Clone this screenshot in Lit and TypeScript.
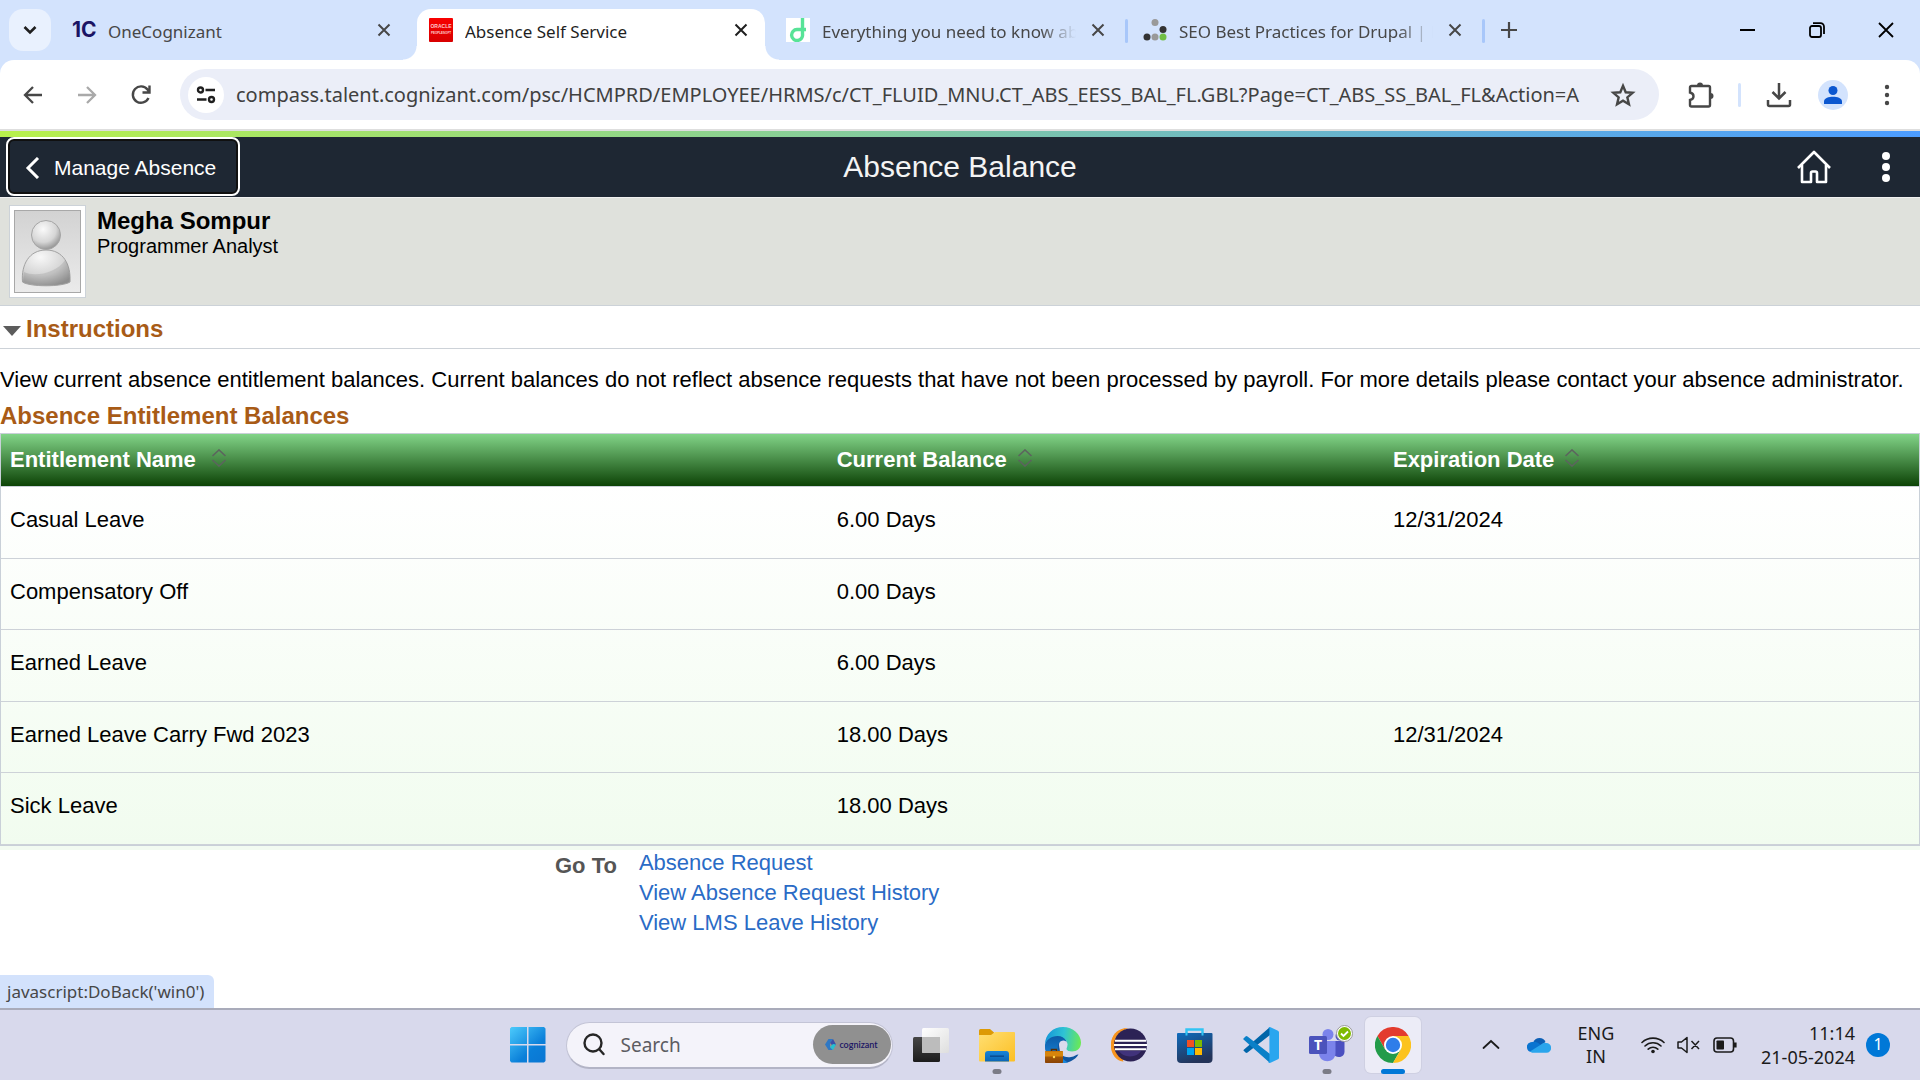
import { LitElement, html, css, svg, nothing } from "lit";
import { customElement, property } from "lit/decorators.js";
import { classMap } from "lit/directives/class-map.js";

const UI_FONT = css`"Noto Sans", "Open Sans", sans-serif`;
const PAGE_FONT = css`"Liberation Sans", Arial, sans-serif`;

const reset = css`
  * { box-sizing: border-box; }
  button, input {
    font: inherit;
    color: inherit;
    background: none;
    border: 0;
    padding: 0;
    margin: 0;
  }
  button { display: flex; align-items: center; justify-content: center; }
  svg { display: block; flex: none; }
`;

interface Tab { title: string; icon: string; active?: boolean; divider?: boolean; }

const TABS: Tab[] = [
  { title: "OneCognizant", icon: "onecognizant" },
  { title: "Absence Self Service", icon: "oracle", active: true },
  { title: "Everything you need to know ab", icon: "d", divider: true },
  { title: "SEO Best Practices for Drupal | D", icon: "dots", divider: true },
];

const favicons: Record<string, unknown> = {
  onecognizant: html`<span class="fav-1c">1C</span>`,
  oracle: html`<svg width="24" height="24" viewBox="0 0 24 24">
    <defs><linearGradient id="o" x2="0" y2="1"><stop offset="0" stop-color="#f80000"/><stop offset="1" stop-color="#d80000"/></linearGradient></defs>
    <rect width="24" height="24" rx="1" fill="url(#o)"/>
    <text x="12" y="10" text-anchor="middle" font-size="5" font-weight="700" fill="#ffc9c9" font-family="Liberation Sans, sans-serif">ORACLE</text>
    <text x="12" y="16" text-anchor="middle" font-size="3" font-weight="700" fill="#ffd5d5" font-family="Liberation Sans, sans-serif">PEOPLESOFT</text>
  </svg>`,
  d: html`<svg width="24" height="24" viewBox="0 0 24 24"><rect width="24" height="24" fill="#fff"/>
    <path d="M16.500 0V16a5.500 5.500 0 1 1-5.500-4.500H20" fill="none" stroke="#57e397" stroke-width="3.400"/></svg>`,
  dots: html`<svg width="24" height="24" viewBox="0 0 24 24">
    <circle cx="12" cy="4.500" r="3.500" fill="#999"/><circle cx="20" cy="11.500" r="3.500" fill="#333"/>
    <circle cx="4" cy="19" r="3.500" fill="#333"/><circle cx="12" cy="19" r="3.500" fill="#999"/><circle cx="20" cy="19" r="3.500" fill="#70bf44"/></svg>`,
};

@customElement("browser-tabs")
class BrowserTabs extends LitElement {
  @property({ attribute: false }) tabs: Tab[] = [];
  static styles = [reset, css`
    :host {
      display: flex;
      height: 60px;
      background: #d3e3fd;
      font-family: ${UI_FONT};
      font-size: 17px;
      color: #474747;
    }
    .strip { display: flex; flex: 1; min-width: 0; padding: 9px 0 0 9px; }
    .menu { width: 42px; height: 42px; border-radius: 14px; background: #e9f1fe; color: #1f1f1f; margin-right: 9px; }
    .tab {
      position: relative;
      display: flex;
      align-items: center;
      flex: 0 1 348px;
      min-width: 0;
      height: 51px;
      padding: 0 12px 9px;
      gap: 12px;
    }
    .active { background: #fff; border-radius: 14px 14px 0 0; color: #1f1f1f; }
    .active::before, .active::after {
      content: "";
      position: absolute;
      bottom: 0;
      width: 14px;
      height: 14px;
    }
    .active::before { right: 100%; background: radial-gradient(circle at 0 0, #0000 13px, #fff 14px); }
    .active::after { left: 100%; background: radial-gradient(circle at 100% 0, #0000 13px, #fff 14px); }
    .fav { display: flex; width: 24px; height: 24px; align-items: center; }
    .fav-1c { font: 700 21px/24px Inter, sans-serif; color: #1b1464; }
    .title {
      flex: 1;
      min-width: 0;
      line-height: 24px;
      margin-top: 4px;
      white-space: nowrap;
      overflow: hidden;
    }
    .fade { margin-right: -6px; mask-image: linear-gradient(90deg, #000 calc(100% - 40px), #0000 calc(100% - 4px)); }
    .close { width: 24px; height: 24px; }
    .divider { flex: none; width: 3px; height: 24px; margin: 10px 3px 0; border-radius: 2px; }
    .shown { background: #a8c7fa; }
    .new { width: 42px; height: 42px; }
    .controls { display: flex; color: #000; }
    .controls button { width: 69px; height: 59px; }
  `];
  render() {
    return html`
      <div class="strip">
        <button class="menu" aria-label="Search tabs">
          <svg width="16" height="16" viewBox="0 0 16 16" fill="none" stroke="currentColor" stroke-width="2.600"><path d="M2.500 5l5.500 5.500L13.500 5"/></svg>
        </button>
        ${this.tabs.map((t) => html`
          <div class=${classMap({ tab: true, active: !!t.active })}>
            <span class="fav">${favicons[t.icon]}</span>
            <span class=${classMap({ title: true, fade: !!t.divider })}>${t.title}</span>
            <button class="close" aria-label="Close tab">
              <svg width="14" height="14" viewBox="0 0 14 14" stroke="currentColor" stroke-width="2"><path d="M1.500 1.500l11 11M12.500 1.500l-11 11"/></svg>
            </button>
          </div>
          <span class=${classMap({ divider: true, shown: !!t.divider })}></span>`)}
        <button class="new" aria-label="New tab">
          <svg width="18" height="18" viewBox="0 0 18 18" stroke="currentColor" stroke-width="2.200"><path d="M9 1v16M1 9h16"/></svg>
        </button>
      </div>
      <div class="controls">
        <button aria-label="Minimize"><svg width="16" height="16" viewBox="0 0 16 16"><path d="M0 8h15" stroke="currentColor" stroke-width="2"/></svg></button>
        <button aria-label="Restore"><svg width="16" height="16" viewBox="0 0 16 16" fill="none" stroke="currentColor" stroke-width="1.800"><rect x="1" y="4" width="11" height="11" rx="2"/><path d="M4 1.200h7.500a3.500 3.500 0 0 1 3.500 3.500V12"/></svg></button>
        <button aria-label="Close window"><svg width="16" height="16" viewBox="0 0 16 16" stroke="currentColor" stroke-width="1.800"><path d="M1 1l14 14M15 1L1 15"/></svg></button>
      </div>`;
  }
}

@customElement("browser-toolbar")
class BrowserToolbar extends LitElement {
  @property() url = "";
  static styles = [reset, css`
    :host { display: block; background: #d3e3fd; color: #474747; font-family: ${UI_FONT}; }
    .bar {
      display: flex;
      align-items: center;
      height: 71px;
      padding: 0 9px;
      background: #fff;
      border-radius: 14px 14px 0 0;
      border-bottom: 2px solid #dedede;
    }
    .nav { display: flex; gap: 6px; margin-right: 15px; }
    .nav button, .tools button { width: 48px; height: 48px; }
    .dim { color: #a9a9a9; }
    .omnibox {
      display: flex;
      align-items: center;
      flex: 1;
      min-width: 0;
      height: 51px;
      padding: 0 12px 0 8px;
      border-radius: 26px;
      background: #ebeef8;
    }
    .site { width: 36px; height: 36px; border-radius: 50%; background: #fff; color: #1f1f1f; margin-right: 12px; }
    .address { flex: 1; min-width: 0; height: 40px; font-size: 20px; color: #404040; outline: none; }
    .star { width: 48px; height: 48px; }
    .tools { display: flex; align-items: center; margin-left: 17px; }
    .rule { width: 3px; height: 24px; background: #d3e3fd; border-radius: 2px; margin: 0 14px; }
    .tools .avatar { width: 30px; height: 30px; border-radius: 50%; background: #d3e3fd; color: #0b57d0; margin: 0 15px; }
  `];
  render() {
    return html`<div class="bar">
      <div class="nav">
        <button aria-label="Back"><svg width="20" height="20" viewBox="0 0 20 20" fill="none" stroke="currentColor" stroke-width="2.300"><path d="M19 10H2.500M10 2L2 10l8 8"/></svg></button>
        <button class="dim" aria-label="Forward"><svg width="20" height="20" viewBox="0 0 20 20" fill="none" stroke="currentColor" stroke-width="2.300"><path d="M1 10h16.500M10 2l8 8-8 8"/></svg></button>
        <button aria-label="Reload"><svg width="22" height="22" viewBox="0 0 22 22" fill="none" stroke="currentColor" stroke-width="2.400"><path d="M18.500 14a8.200 8.200 0 1 1-1-8.500L19 7.500M19.500 1.500V8.500H12.500"/></svg></button>
      </div>
      <div class="omnibox">
        <button class="site" aria-label="View site information"><svg width="20" height="20" viewBox="0 0 20 20" fill="none" stroke="currentColor" stroke-width="2.400"><circle cx="4.500" cy="5" r="2.500"/><path d="M9.500 5H19M1 14.500h9.500"/><circle cx="15.500" cy="14.500" r="2.500"/></svg></button>
        <input class="address" type="text" aria-label="Address and search bar" .value=${this.url} />
        <button class="star" aria-label="Bookmark this tab"><svg width="26" height="26" viewBox="0 0 24 24" fill="none" stroke="currentColor" stroke-width="2.200"><path d="M12 3.500l2.500 6 6.400.500-4.900 4.200 1.500 6.300L12 17.200l-5.500 3.300L8 14.200 3.100 10l6.400-.500z"/></svg></button>
      </div>
      <div class="tools">
        <button aria-label="Extensions"><svg width="28" height="28" viewBox="0 0 28 28" fill="none" stroke="currentColor" stroke-width="2.400"><path d="M5.500 5h17a1.500 1.500 0 0 1 1.500 1.500V24a1.500 1.500 0 0 1-1.500 1.500h-17A1.500 1.500 0 0 1 4 24v-5c2.500-.500 3.500-2 3.500-3.800S6.500 12 4 11.500v-5A1.500 1.500 0 0 1 5.500 5z"/><path d="M11 4.500a3 3 0 0 1 6 0zM24.500 12a3 3 0 0 1 0 6z" fill="currentColor" stroke="none"/></svg></button>
        <span class="rule"></span>
        <button aria-label="Downloads"><svg width="26" height="26" viewBox="0 0 26 26" fill="none" stroke="currentColor" stroke-width="2.500"><path d="M13 1v15M6.500 10l6.500 6.500L19.500 10M2 18v4.500A1.500 1.500 0 0 0 3.500 24h19a1.500 1.500 0 0 0 1.500-1.500V18"/></svg></button>
        <button class="avatar" aria-label="Profile"><svg width="20" height="20" viewBox="0 0 20 20" fill="currentColor"><circle cx="10" cy="5.500" r="4.500"/><path d="M1 19v-2.500C1 13 6 11.800 10 11.800s9 1.200 9 4.700V19z"/></svg></button>
        <button aria-label="Chrome menu"><svg width="6" height="22" viewBox="0 0 6 22" fill="currentColor"><circle cx="3" cy="3" r="2.200"/><circle cx="3" cy="11" r="2.200"/><circle cx="3" cy="19" r="2.200"/></svg></button>
      </div>
    </div>`;
  }
}

interface Balance { name: string; balance: string; expires?: string; }

const BALANCES: Balance[] = [
  { name: "Casual Leave", balance: "6.00 Days", expires: "12/31/2024" },
  { name: "Compensatory Off", balance: "0.00 Days" },
  { name: "Earned Leave", balance: "6.00 Days" },
  { name: "Earned Leave Carry Fwd 2023", balance: "18.00 Days", expires: "12/31/2024" },
  { name: "Sick Leave", balance: "18.00 Days" },
];

@customElement("absence-balance-page")
class AbsenceBalancePage extends LitElement {
  @property({ attribute: false }) rows: Balance[] = [];
  static styles = [reset, css`
    :host { display: block; background: #fff; color: #000; font-family: ${PAGE_FONT}; font-size: 22px; }
    h1, h2, p { margin: 0; }
    .accent { height: 6px; background: linear-gradient(90deg, #b8f04c, #90d58a 35%, #5fadde 78%, #4c9cff); }
    .header {
      display: grid;
      grid-template-columns: 1fr auto 1fr;
      align-items: center;
      height: 60px;
      padding: 0 6px;
      background: #1e2733;
      color: #fff;
    }
    .back {
      place-self: start;
      width: 234px;
      height: 59px;
      justify-content: flex-start;
      gap: 13px;
      padding: 2px 0 0 15px;
      border: 2px solid #fff;
      border-radius: 8px;
      box-shadow: inset 0 0 0 2px #101010;
      font-size: 21px;
    }
    h1 { font-size: 30px; line-height: 34px; font-weight: 400; color: #f4f4f4; }
    .actions { display: flex; justify-content: flex-end; gap: 16px; }
    .actions button { width: 56px; height: 56px; }
    .person {
      display: flex;
      gap: 11px;
      height: 109px;
      padding: 7px 9px 0;
      background: #dfe1dc;
      border-top: 1px solid #f0f0f0;
      border-bottom: 1px solid #ccd2d8;
    }
    .photo { width: 77px; height: 93px; padding: 4px; background: #fff; border: 1px solid #ccd2d8; }
    h2 { font-size: 24px; line-height: 28px; color: #a85b16; }
    .person h2 { color: #000; padding-top: 2px; }
    .role { font-size: 20px; line-height: 22px; }
    .section {
      display: flex;
      align-items: center;
      width: 100%;
      height: 43px;
      padding: 4px 0 0 3px;
      gap: 5px;
      border-bottom: 1px solid #cdd2d8;
      justify-content: flex-start;
    }
    .section svg { margin-top: 3px; }
    .intro { line-height: 26px; padding-top: 18px; }
    .caption { padding: 9px 0 3px; line-height: 28px; }
    table {
      width: 100%;
      border-collapse: separate;
      border-spacing: 0;
      table-layout: fixed;
      text-align: left;
      border: 1px solid #c9d0d8;
      background: linear-gradient(#fff 50px, #f1fcef);
    }
    .name { width: 43%; }
    .amount { width: 29%; }
    thead tr { background: linear-gradient(#82d488, #0a4003); }
    th { height: 53px; padding: 0 0 1px 9px; color: #fff; border-bottom: 1px solid #c9d0d8; }
    .sort { gap: 10px; font-weight: 700; }
    .name .sort { gap: 15px; }
    .sort svg { margin-bottom: 3px; }
    td { height: 71px; padding: 0 0 5px 9px; border-bottom: 1px solid #cdd2d8; }
    th + th, td + td { padding-left: 11px; }
    tr:nth-child(odd) td { height: 72px; }
    .tail { height: 4px; background: #f2fbf1; }
    .goto { display: flex; gap: 22px; padding-left: 555px; }
    .label { font-weight: 700; color: #555; line-height: 30px; padding-top: 1px; }
    .links { display: flex; flex-direction: column; line-height: 30px; margin-top: -2px; }
    .links a { color: #2a6bc6; text-decoration: none; }
  `];
  private heading(text: string) {
    return html`<button class="sort">${text}<svg width="16" height="18" viewBox="0 0 16 18" fill="none" stroke="#5c645e" stroke-width="1.600"><path d="M1.500 7l6.500-6 6.500 6M1.500 11l6.500 6 6.500-6"/></svg></button>`;
  }
  render() {
    return html`
      <div class="accent"></div>
      <header class="header">
        <button class="back"><svg width="18" height="22" viewBox="0 0 18 22" fill="none" stroke="#fff" stroke-width="3"><path d="M15 1L5 11l10 10"/></svg>Manage Absence</button>
        <h1>Absence Balance</h1>
        <div class="actions">
          <button aria-label="Home"><svg width="34" height="34" viewBox="0 0 34 34" fill="none" stroke="#fff" stroke-width="2.600" stroke-linejoin="round"><path d="M1 18L17 2l16 16"/><path d="M5 15v17h9V23a1.500 1.500 0 0 1 1.500-1.500h3A1.500 1.500 0 0 1 20 23v9h9V15"/></svg></button>
          <button aria-label="Actions list"><svg width="10" height="34" viewBox="0 0 10 34" fill="#fff"><circle cx="5" cy="6" r="4"/><circle cx="5" cy="17" r="4"/><circle cx="5" cy="28" r="4"/></svg></button>
        </div>
      </header>
      <section class="person">
        <div class="photo">
          <svg width="67" height="83" viewBox="0 0 67 83">
            <defs>
              <linearGradient id="bg" x2="0" y2="1"><stop offset="0" stop-color="#d2d2d2"/><stop offset="1" stop-color="#ebebeb"/></linearGradient>
              <radialGradient id="hd" cx=".4" cy=".3" r=".75"><stop offset="0" stop-color="#fafafa"/><stop offset=".6" stop-color="#d6d6d6"/><stop offset="1" stop-color="#8b8b8b"/></radialGradient>
              <radialGradient id="bd" cx=".38" cy=".2" r=".85"><stop offset="0" stop-color="#f8f8f8"/><stop offset=".6" stop-color="#d4d4d4"/><stop offset="1" stop-color="#909090"/></radialGradient>
            </defs>
            <rect x=".5" y=".5" width="66" height="82" fill="url(#bg)" stroke="#a8a8a8"/>
            <path d="M8.500 72C7 55 15 40 32 40s25 14 24 32c-8 5-40 5-47.500 0z" fill="url(#bd)" stroke="#a2a2a2"/>
            <path d="M10 62c10 5 32 2 41-12 6 8 5 16 4.500 21.500-8 4.500-38 4.500-46 0z" fill="#888" opacity=".25"/>
            <circle cx="32" cy="25" r="14.500" fill="url(#hd)" stroke="#a5a5a5"/>
          </svg>
        </div>
        <div><h2>Megha Sompur</h2><p class="role">Programmer Analyst</p></div>
      </section>
      <button class="section" aria-expanded="true">
        <svg width="18" height="10" viewBox="0 0 18 10"><path d="M0 0h18L9 10z" fill="#5c5c5c"/></svg>
        <h2>Instructions</h2>
      </button>
      <p class="intro">View current absence entitlement balances. Current balances do not reflect absence requests that have not been processed by payroll. For more details please contact your absence administrator.</p>
      <h2 class="caption">Absence Entitlement Balances</h2>
      <table>
        <thead><tr>
          <th class="name" scope="col">${this.heading("Entitlement Name")}</th>
          <th class="amount" scope="col">${this.heading("Current Balance")}</th>
          <th scope="col">${this.heading("Expiration Date")}</th>
        </tr></thead>
        <tbody>${this.rows.map((r) => html`<tr><td>${r.name}</td><td>${r.balance}</td><td>${r.expires ?? nothing}</td></tr>`)}</tbody>
      </table>
      <div class="tail"></div>
      <nav class="goto" aria-labelledby="goto">
        <span class="label" id="goto">Go To</span>
        <div class="links">
          <a href="#request">Absence Request</a>
          <a href="#history">View Absence Request History</a>
          <a href="#lms">View LMS Leave History</a>
        </div>
      </nav>`;
  }
}

const pinned = [
  { name: "Task View", art: svg`
    <defs><linearGradient id="tk" x2="0" y2="1"><stop offset="0" stop-color="#464646"/><stop offset="1" stop-color="#1c1c1c"/></linearGradient>
    <linearGradient id="tw" x2="1" y2="1"><stop offset="0" stop-color="#fff"/><stop offset="1" stop-color="#dedede"/></linearGradient></defs>
    <rect x="0" y="10" width="27" height="25" rx="1.500" fill="url(#tk)"/><rect x="9" y="1" width="27" height="25" rx="1.500" fill="url(#tw)"/>
    <path d="M9 10h18v16H10.500A1.500 1.500 0 0 1 9 24.500z" fill="#bcbcbc"/>` },
  { name: "File Explorer", dot: true, art: svg`
    <defs><linearGradient id="fy" x2="1" y2="1"><stop offset="0" stop-color="#ffdf73"/><stop offset="1" stop-color="#fcbf23"/></linearGradient>
    <linearGradient id="fb" x2="0" y2="1"><stop offset="0" stop-color="#1784d8"/><stop offset="1" stop-color="#0a66b5"/></linearGradient></defs>
    <path d="M0 3.500A1.500 1.500 0 0 1 1.500 2H11l4 3.500V9H0z" fill="#dd9a05"/><path d="M0 8h12l4-3h19a1 1 0 0 1 1 1v27.500a1 1 0 0 1-1 1H1a1 1 0 0 1-1-1z" fill="url(#fy)"/>
    <path d="M6 34.500V27a3 3 0 0 1 3-3h18a3 3 0 0 1 3 3v7.500z" fill="url(#fb)"/><path d="M11 29.200h14" stroke="#0a4c91" stroke-width="1.500"/>` },
  { name: "Microsoft Edge", art: svg`
    <defs><linearGradient id="e1" x1="0" y1=".5" x2="1" y2=".6"><stop offset="0" stop-color="#1597d8"/><stop offset=".5" stop-color="#2fc3d4"/><stop offset="1" stop-color="#6bea53"/></linearGradient>
    <linearGradient id="e2" x2="0" y2="1"><stop offset="0" stop-color="#0c59a4"/><stop offset="1" stop-color="#1a8be0"/></linearGradient>
    <linearGradient id="ec" x2="0" y2="1"><stop offset="0" stop-color="#b96c08"/><stop offset="1" stop-color="#8a4305"/></linearGradient></defs>
    <path d="M18 15c-6 5-4 17 8 15 4-.600 6-3 7.500-2.500C30 33 24 36 18 36 8 36 0 28 0 19 2 10 14 9 18 15z" fill="#0f55a0"/>
    <path d="M0 19C0 11 9 5 17 9c4 2 5 5 4 7-5-4-9 0-8 6 .500 6 4 10 10 13.500C10 38 0 30 0 19z" fill="url(#e2)"/>
    <path d="M0 18C0 7 8 0 18 0s18 7.500 18 15.500c0 6-4 9-9 9-4 0-6.500-1.500-5.500-3 3-5-1-12.500-9-12.500C6 9 1 13 0 18z" fill="url(#e1)"/>
    <path d="M14 18a4.200 4.200 0 0 1 8-2c1 3-1.500 4.500-.500 6.500s7 3.500 11 1.500c-5 6-18 5-18.500-6z" fill="#d9dbed"/>
    <rect x="0" y="24" width="18" height="12" rx=".8" fill="url(#ec)"/><path d="M0 24.500h18v5H0z" fill="#d6850c"/><path d="M6.500 24v-1.500h5V24" fill="none" stroke="#552d06" stroke-width="1.500"/><circle cx="9" cy="30" r="1.200" fill="#ffd64c"/>` },
  { name: "Eclipse", art: svg`
    <path d="M17 1A17 17 0 0 0 13 34.500 19 19 0 0 1 17 1z" fill="#f7941e"/><path d="M14 1.500C-4.500 3-4.500 32 12 34.500z" fill="#f7941e"/><circle cx="19.500" cy="18" r="16.500" fill="#2c2255"/>
    <path d="M8 24a12 9 0 0 0 22 0z" fill="#4a3b8c" opacity=".7"/>
    <path d="M4 13.800h31M3 18h33M4 22.200h31" stroke="#fff" stroke-width="2"/>` },
  { name: "Microsoft Store", art: svg`
    <defs><linearGradient id="st" x2=".4" y2="1"><stop offset="0" stop-color="#0f6cbd"/><stop offset="1" stop-color="#243459"/></linearGradient></defs>
    <path d="M9.500 8V2.500h16V8" fill="none" stroke="#31c4f3" stroke-width="2.400"/><path d="M0 7a1 1 0 0 1 1-1h33.500a1 1 0 0 1 1 1v25a4 4 0 0 1-4 4H4a4 4 0 0 1-4-4z" fill="url(#st)"/>
    <path d="M8.500 5.500h2v3h-2zM24.500 5.500h2v3h-2z" fill="#31c4f3"/>
    <path d="M10 13h7v7h-7z" fill="#f25022"/><path d="M18 13h7v7h-7z" fill="#7fba00"/><path d="M10 21h7v7h-7z" fill="#00a4ef"/><path d="M18 21h7v7h-7z" fill="#ffb900"/>` },
  { name: "Visual Studio Code", art: svg`
    <path d="M.5 23.500l2 2a1.500 1.500 0 0 0 2 0L27 8V0L.5 23a.400.400 0 0 0 0 .5z" fill="#0065a9"/>
    <path d="M.5 11.500l2-2a1.500 1.500 0 0 1 2 0L27 27v9L.5 12.500a.700.700 0 0 1 0-1z" fill="#0a80c8"/>
    <path d="M27 0l8 3.700a1.800 1.800 0 0 1 1 1.600v25.400a1.800 1.800 0 0 1-1 1.600L27 36c-1 .3-1.800 0-2.300-.5.700.4 1.700 0 1.700-1V1.500c0-1-1-1.400-1.700-1C25.200 0 26 0 27 0z" fill="#2aa6ef"/>` },
  { name: "Microsoft Teams", dot: true, badge: true, art: svg`
    <circle cx="31" cy="9" r="4.500" fill="#4b50c0"/><path d="M24 14h11.500v10.500c0 7-9.500 7-11.500 2z" fill="#4b50c0"/>
    <circle cx="19" cy="7.500" r="5.500" fill="#7b83eb"/><path d="M10 14h16.500v12c0 11-16.500 11-16.500 0z" fill="#7b83eb"/>
    <rect x="0" y="9" width="18" height="18" rx="1.500" fill="#4b53bc"/>
    <text x="9" y="23" text-anchor="middle" font-size="14" font-weight="700" fill="#fff" font-family="Open Sans, sans-serif">T</text>` },
  { name: "Google Chrome", active: true, art: svg`<g transform="scale(.75)">
    <path d="M3.200 12A24 24 0 0 1 44.800 12H24L13.600 30z" fill="#e33b2e"/><path d="M3.200 12L13.600 30h20.800L24 48A24 24 0 0 1 3.200 12z" fill="#229b4a"/>
    <path d="M44.800 12H24l10.400 18L24 48A24 24 0 0 0 44.800 12z" fill="#fcc31e"/><circle cx="24" cy="24" r="12" fill="#fff"/><circle cx="24" cy="24" r="9.600" fill="#2f7de9"/></g>` },
];

@customElement("desktop-taskbar")
class DesktopTaskbar extends LitElement {
  static styles = [reset, css`
    :host {
      display: grid;
      grid-template-columns: 1fr auto 1fr;
      align-items: center;
      height: 72px;
      border-top: 2px solid #a9abba;
      background: #d8d9ec;
      color: #1b1b1b;
      font-family: ${UI_FONT};
      font-size: 18px;
    }
    .apps { grid-column: 2; display: flex; align-items: center; gap: 10px; }
    .app { position: relative; width: 56px; height: 56px; border-radius: 6px; }
    .current { background: #ececf7; box-shadow: 0 0 0 1px #cfd0e2; }
    .mark { position: absolute; left: 50%; bottom: -1px; width: 9px; height: 5px; border-radius: 3px; background: #7b7c87; transform: translateX(-50%); }
    .current .mark { width: 24px; background: #0078d7; }
    .presence { position: absolute; right: 2px; top: 8px; }
    .search {
      display: flex;
      align-items: center;
      width: 327px;
      height: 47px;
      padding: 0 1px 0 16px;
      gap: 16px;
      border-radius: 24px;
      background: #f4f3fa;
      border: 1px solid #c3c4d6;
      border-bottom: 2px solid #b3b4c6;
    }
    .query { flex: 1; min-width: 0; font-size: 19px; outline: none; }
    .query::placeholder { color: #5c5c62; opacity: 1; }
    .brand { display: flex; align-items: center; justify-content: center; gap: 3px; width: 78px; height: 39px; border-radius: 20px; background: #909090; color: #1b1464; font: 600 9px/12px Lato, sans-serif; }
    .tray { display: flex; align-items: center; justify-content: flex-end; gap: 24px; padding-right: 30px; line-height: 24px; }
    .lang { width: 42px; display: block; text-align: center; line-height: 23px; }
    .status { gap: 12px; }
    .when { display: flex; align-items: center; gap: 11px; text-align: right; white-space: nowrap; }
    .time { display: block; width: 94px; }
    .count { width: 24px; height: 24px; border-radius: 50%; background: #0078d7; color: #fff; font-size: 16px; line-height: 23px; text-align: center; }
  `];
  render() {
    return html`
      <div class="apps">
        <button class="app" aria-label="Start"><svg width="36" height="36" viewBox="0 0 36 36">
          <defs><linearGradient id="w" gradientUnits="userSpaceOnUse" x1="0" y1="0" x2="30" y2="34"><stop offset="0" stop-color="#4ccbfc"/><stop offset=".7" stop-color="#0a7fd9"/><stop offset="1" stop-color="#0a78d4"/></linearGradient></defs>
          <path d="M1.500 0H17v17H0V1.500zM18.500 0H34l1.500 1.500V17h-17zM0 18.500h17v17H1.500L0 34zM18.500 18.500h17V34L34 35.500H18.500z" fill="url(#w)"/></svg></button>
        <label class="search">
          <svg width="22" height="23" viewBox="0 0 22 23" fill="none" stroke="#262626" stroke-width="2.400" stroke-linecap="round"><circle cx="10" cy="10" r="8.500"/><path d="M16.500 16.500l4 4.500"/></svg>
          <input class="query" type="text" placeholder="Search" aria-label="Search" />
          <span class="brand"><svg width="11" height="11" viewBox="0 0 11 11"><path d="M0 5.500L3.500 0H8L5 4v4l3 3H3.500z" fill="#2f78c4"/><path d="M8 0l3 5.500L9 8 5 4z" fill="#3b4fa8"/><path d="M5 8l3-3 3 .5L8 11z" fill="#26c0d0"/></svg>cognizant</span>
        </label>
        ${pinned.map((p) => html`
          <button class=${classMap({ app: true, current: !!p.active })} aria-label=${p.name}>
            <svg width="36" height="36" viewBox="0 0 36 36">${p.art}</svg>
            ${p.badge ? html`<svg class="presence" width="17" height="17" viewBox="0 0 17 17"><circle cx="8.500" cy="8.500" r="8" fill="#fff" stroke="#999"/><circle cx="8.500" cy="8.500" r="6.500" fill="#7fba00"/><path d="M5 8.500l2.500 2.500 4.500-4.500" fill="none" stroke="#fff" stroke-width="1.800"/></svg>` : nothing}
            ${p.dot || p.active ? html`<span class="mark"></span>` : nothing}
          </button>`)}
      </div>
      <div class="tray">
        <button aria-label="Show hidden icons"><svg width="24" height="16" viewBox="0 0 24 16" fill="none" stroke="currentColor" stroke-width="1.800" stroke-linecap="round"><path d="M4.500 11L12 4l7.500 7"/></svg></button>
        <button aria-label="OneDrive"><svg width="24" height="16" viewBox="0 0 24 16"><path d="M6.500 5A6.500 6.500 0 0 1 18.500 5L13 9z" fill="#0c5fb5"/><path d="M5 15a5 5 0 0 1-1.500-9.800C8 3.500 12 6 14 8L6 15z" fill="#0a74d0"/><path d="M3 14.500L14.500 7.300A4 4 0 0 1 19 6a4.800 4.800 0 0 1 .500 9.800H5z" fill="#2aa5ec"/></svg></button>
        <button class="lang" aria-label="Input language">ENG<br />IN</button>
        <button class="status" aria-label="Network, volume and battery">
          <svg width="24" height="18" viewBox="0 0 24 18" fill="none" stroke="currentColor" stroke-width="1.600" stroke-linecap="round"><path d="M1 6.500a16 16 0 0 1 22 0M4 10a11.500 11.500 0 0 1 16 0M7.200 13.200a7 7 0 0 1 9.600 0"/><circle cx="12" cy="15.500" r="1.800" fill="currentColor" stroke="none"/></svg>
          <svg width="24" height="18" viewBox="0 0 24 18" fill="none" stroke="currentColor" stroke-width="1.500" stroke-linejoin="round"><path d="M1 6h3.500L10 1.500v15L4.500 12H1zM14.500 5l7.500 8M22 5l-7.500 8"/></svg>
          <svg width="24" height="18" viewBox="0 0 24 18" fill="none" stroke="currentColor" stroke-width="1.600"><rect x="1" y="2" width="19.500" height="14" rx="3"/><rect x="3.500" y="4.500" width="7.500" height="9" rx=".8" fill="currentColor" stroke="none"/><path d="M22.200 6.500v5" stroke-width="2.800"/></svg>
        </button>
        <div class="when"><time class="time" datetime="2024-05-21T11:14">11:14<br />21-05-2024</time><span class="count">1</span></div>
      </div>`;
  }
}

@customElement("app-root")
class AppRoot extends LitElement {
  static styles = [reset, css`
    :host { display: flex; flex-direction: column; min-height: 100vh; background: #fff; }
    .content { position: relative; flex: 1; }
    .hint {
      position: absolute;
      left: 0;
      bottom: 0;
      padding: 5px 10px 4px 7px;
      background: #d3e2fc;
      border-top-right-radius: 6px;
      color: #474747;
      font: 17px/24px ${UI_FONT};
    }
  `];
  render() {
    return html`
      <browser-tabs .tabs=${TABS}></browser-tabs>
      <browser-toolbar url="compass.talent.cognizant.com/psc/HCMPRD/EMPLOYEE/HRMS/c/CT_FLUID_MNU.CT_ABS_EESS_BAL_FL.GBL?Page=CT_ABS_SS_BAL_FL&Action=A"></browser-toolbar>
      <main class="content">
        <absence-balance-page .rows=${BALANCES}></absence-balance-page>
        <div class="hint">javascript:DoBack('win0')</div>
      </main>
      <desktop-taskbar></desktop-taskbar>`;
  }
}
